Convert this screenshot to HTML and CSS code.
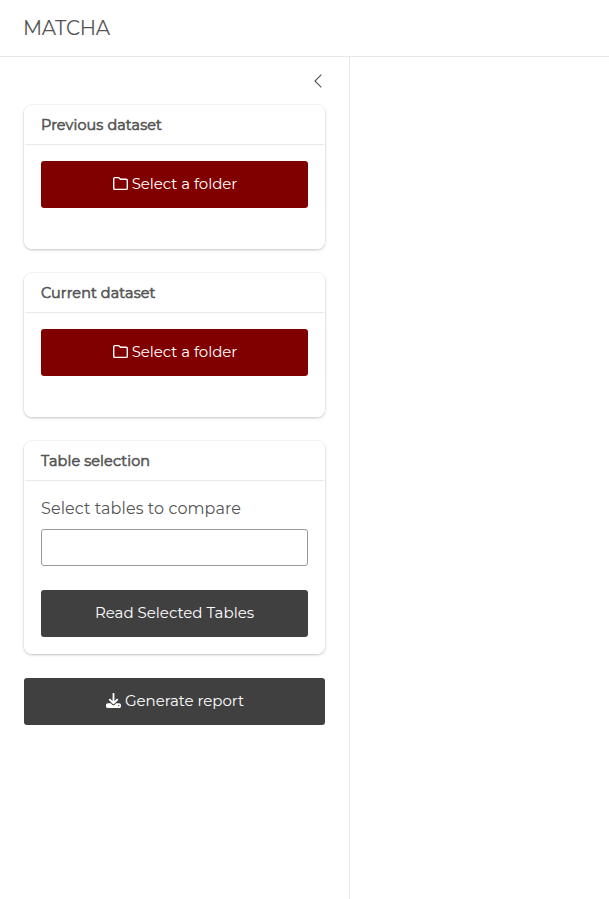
FILE: index.html
```html
<!DOCTYPE html>
<html lang="en">
<head>
<meta charset="utf-8">
<title>MATCHA</title>
<link rel="stylesheet" href="styles.css">
</head>
<body>
<header class="navbar"><span class="brand">MATCHA</span></header>
<div class="layout">
  <aside class="sidebar">
    <div class="toggle-row">
      <svg class="chevron" viewBox="0 0 16 16"><path d="M11.3 1.7 5 8l6.3 6.3"/></svg>
    </div>
    <section class="card card-dataset">
      <h2 class="card-header">Previous dataset</h2>
      <div class="card-body">
        <button class="btn btn-primary btn-icon"><svg class="icon" viewBox="0 0 512 512"><path class="outline" d="M24 96c0-22 18-40 40-40h119c11 0 21 4 28 12l32 32c8 8 18 12 29 12h176c22 0 40 18 40 40v264c0 22-18 40-40 40H64c-22 0-40-18-40-40z"/></svg><span>Select a folder</span></button>
      </div>
    </section>
    <section class="card card-dataset">
      <h2 class="card-header">Current dataset</h2>
      <div class="card-body">
        <button class="btn btn-primary btn-icon"><svg class="icon" viewBox="0 0 512 512"><path class="outline" d="M24 96c0-22 18-40 40-40h119c11 0 21 4 28 12l32 32c8 8 18 12 29 12h176c22 0 40 18 40 40v264c0 22-18 40-40 40H64c-22 0-40-18-40-40z"/></svg><span>Select a folder</span></button>
      </div>
    </section>
    <section class="card card-tables">
      <h2 class="card-header">Table selection</h2>
      <div class="card-body">
        <label class="label" for="tables">Select tables to compare</label>
        <input class="input" id="tables" type="text">
        <button class="btn btn-dark"><span>Read Selected Tables</span></button>
      </div>
    </section>
    <button class="btn btn-dark btn-icon"><svg class="icon" viewBox="0 0 512 512"><path class="solid" fill-rule="evenodd" d="M288 32c0-18-14-32-32-32s-32 14-32 32v243l-73-74c-13-12-33-12-46 0-12 13-12 33 0 46l128 128c13 12 33 12 46 0l128-128c12-13 12-33 0-46-13-12-33-12-46 0l-73 74V32zM64 352c-35 0-64 29-64 64v32c0 35 29 64 64 64h384c35 0 64-29 64-64v-32c0-35-29-64-64-64H347l-46 45c-25 25-65 25-90 0l-46-45H64zm368 56a24 24 0 1 1 0 48 24 24 0 1 1 0-48z"/></svg><span>Generate report</span></button>
  </aside>
  <main class="main"></main>
</div>
</body>
</html>
```
FILE: styles.css
```css
* { box-sizing: border-box; }
body {
  margin: 0;
  height: 899px;
  display: flex;
  flex-direction: column;
  overflow: hidden;
  background: #fff;
  color: #555;
  font-family: Montserrat, Inter, sans-serif;
  font-weight: 400;
}
.navbar {
  height: 57px;
  padding: 0 23px;
  display: flex;
  align-items: center;
  border-bottom: 1px solid #e7e8e9;
}
.brand { font-size: 20px; line-height: 30px; letter-spacing: -.35px; }
.layout { flex: 1; display: flex; }
.sidebar {
  width: 350px;
  padding: 0 24px;
  border-right: 1px solid #e7e8e9;
  display: flex;
  flex-direction: column;
  gap: 24px;
}
.main { flex: 1; }
.toggle-row {
  height: 24px;
  padding-top: 16px;
  display: flex;
  justify-content: flex-end;
}
.chevron {
  width: 16px;
  height: 16px;
  flex: none;
  margin-right: -1px;
  fill: none;
  stroke: #505050;
  stroke-width: 1.1;
}
.card {
  border: 1px solid #fff;
  border-radius: 8px;
  box-shadow: 0 0 0 .5px rgba(0, 0, 0, .05), 0 1px 3px rgba(0, 0, 0, .22);
}
.card-dataset { height: 144px; }
.card-tables { height: 213px; }
.card-header {
  margin: 0;
  height: 39px;
  padding: 0 16px;
  border-bottom: 1px solid #e9e9e9;
  font-size: 14.4px;
  line-height: 38px;
  font-weight: 400;
  letter-spacing: .12px;
  -webkit-text-stroke: .6px #555;
}
.card-body { padding: 16px; }
.btn {
  width: 100%;
  height: 47px;
  flex: none;
  border: 0;
  border-radius: 3px;
  padding: 0 0 2px;
  display: flex;
  align-items: center;
  justify-content: center;
  gap: 4px;
  color: #fff;
  font: inherit;
  font-size: 15px;
}
.btn-icon { padding-left: 1px; letter-spacing: -.05px; }
.btn-primary { background: #800000; }
.btn-dark { background: #404040; }
.icon { width: 15px; height: 15px; flex: none; }
.outline { fill: none; stroke: #fff; stroke-width: 48; }
.solid { fill: #fff; }
.label {
  display: block;
  height: 24px;
  margin-bottom: 8px;
  font-size: 16px;
  line-height: 23px;
  letter-spacing: .08px;
}
.input {
  display: block;
  width: 100%;
  height: 37px;
  margin: 0 0 24px;
  border: 1px solid #999;
  border-radius: 3px;
  background: #fff;
}
span { white-space: nowrap; }
```
